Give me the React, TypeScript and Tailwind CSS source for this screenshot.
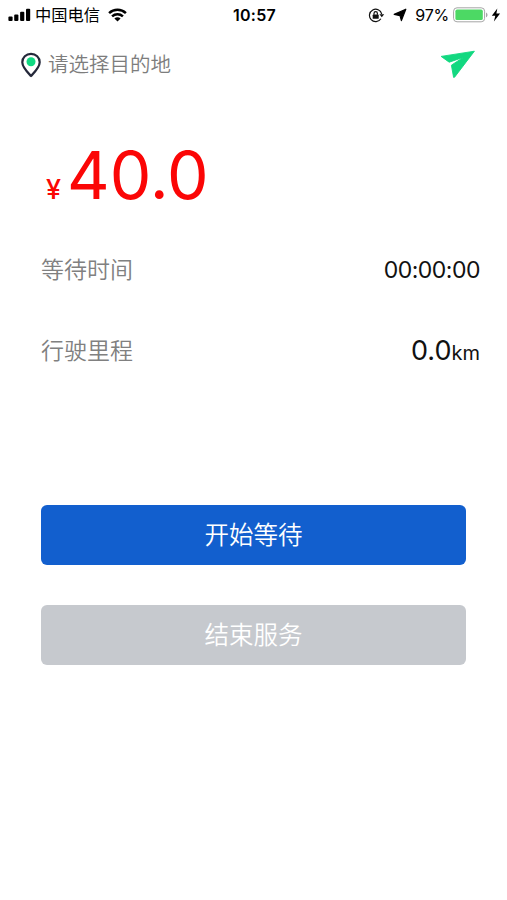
import React from 'react';

const SignalIcon = () => (
  <svg width="23" height="14" viewBox="0 0 23 14" fill="#000">
    <rect x="0.4" y="8.6" width="4.2" height="4.4" rx="1" />
    <rect x="6.2" y="6.4" width="4.2" height="6.6" rx="1" />
    <rect x="12.1" y="3.8" width="4.2" height="9.2" rx="1" />
    <rect x="18" y="0.8" width="4.2" height="12.2" rx="1" />
  </svg>
);

const WifiIcon = () => (
  <svg width="19" height="14" viewBox="0 0 19 14" fill="none" stroke="#000" strokeWidth="2.5">
    <path d="M1.1 5.1C5.8 0.6 13.2 0.6 17.9 5.1" />
    <path d="M4.1 8.4C7.1 5.6 11.9 5.6 14.9 8.4" />
    <path d="M9.5 13.6L6.4 10.5C8.1 8.9 10.9 8.9 12.6 10.5Z" fill="#000" stroke="none" />
  </svg>
);

const RotationLockIcon = () => (
  <svg width="17" height="15" viewBox="0 0 17 15" fill="none" stroke="#111" strokeWidth="1.2">
    <path d="M12.9 10.8A6.2 6.2 0 1 1 13.7 6" />
    <path d="M11.4 6.3H16.2L13.8 9.3Z" fill="#111" stroke="none" />
    <rect x="4.7" y="6.6" width="6" height="4.2" rx="0.6" fill="#111" stroke="none" />
    <path d="M6 6.8V5.4A1.7 1.7 0 0 1 9.4 5.4V6.8" />
  </svg>
);

const LocationArrowIcon = () => (
  <svg width="14" height="14" viewBox="0 0 14 14" fill="#000" stroke="#000" strokeWidth="1.2" strokeLinejoin="round">
    <path d="M12.8 1.2L8.4 12.6L7 7.6L1.2 6.4Z" />
  </svg>
);

const BatteryIcon = () => (
  <svg width="36" height="16" viewBox="0 0 36 16" fill="none">
    <rect x="0.6" y="0.8" width="31" height="14" rx="3.4" stroke="#a5a5a5" strokeWidth="1" />
    <rect x="2.4" y="2.6" width="27.4" height="10.4" rx="1.6" fill="#4cd964" />
    <path d="M33 5.4C35 6.2 35 9.4 33 10.2Z" fill="#a5a5a5" />
  </svg>
);

const BoltIcon = () => (
  <svg width="10" height="14" viewBox="0 0 10 14" fill="#000">
    <path d="M6.3 0.4L0.8 7.8H4.3L2.9 13.4L9.1 5.5H5.4Z" />
  </svg>
);

const PinIcon = () => (
  <svg width="22" height="26" viewBox="0 0 22 26" fill="none">
    <path
      d="M11 24C8 20.8 2.3 15.5 2.3 10.3C2.3 5.3 6.1 1.9 11 1.9C15.9 1.9 19.7 5.3 19.7 10.3C19.7 15.5 14 20.8 11 24Z"
      stroke="#24283a"
      strokeWidth="2.2"
      strokeLinejoin="round"
    />
    <circle cx="11" cy="9.8" r="4.5" fill="#10d982" />
  </svg>
);

const SendIcon = () => (
  <svg width="36" height="30" viewBox="0 0 36 30" fill="#12d880" stroke="#12d880" strokeWidth="0.9" strokeLinejoin="round">
    <path d="M34.4 1.2L1.1 6.4L9.2 12.2L23.2 7.4L11.4 15.2L13.6 27.4L14.6 27.2Z" />
  </svg>
);

const StatusBar = () => (
  <header className="flex h-[30px] items-center pr-[6px] pl-2 text-black">
    <div className="flex flex-1 items-center">
      <SignalIcon />
      <span className="ml-1 text-[16.3px] leading-none">中国电信</span>
      <span className="ml-2"><WifiIcon /></span>
    </div>
    <span className="text-[16px] leading-none font-semibold tracking-[0.3px]">10:57</span>
    <div className="flex flex-1 items-center justify-end">
      <RotationLockIcon />
      <span className="ml-2"><LocationArrowIcon /></span>
      <span className="ml-2 text-[16px] leading-none tracking-[-0.2px]">97%</span>
      <span className="ml-1"><BatteryIcon /></span>
      <span className="ml-[2px]"><BoltIcon /></span>
    </div>
  </header>
);

interface InfoRowProps {
  label: string;
  children: React.ReactNode;
}

const InfoRow: React.FC<InfoRowProps> = ({ label, children }) => (
  <div className="flex h-[81px] items-center justify-between pr-[27px] pl-[41px]">
    <span className="text-[23px] font-[350] text-[#808080]">{label}</span>
    <span className="text-[#111]">{children}</span>
  </div>
);

export default function App() {
  return (
    <div className="h-[900px] w-full overflow-hidden bg-white font-['Inter','Noto_Sans_CJK_SC',sans-serif]">
      <StatusBar />

      <div className="flex h-[70px] items-center justify-between pr-[31px] pl-5">
        <div className="flex items-center">
          <PinIcon />
          <span className="ml-[6px] pt-px text-[20.5px] font-[350] text-[#7d7d7d]">请选择目的地</span>
        </div>
        <SendIcon />
      </div>

      <div className="flex h-[130px] items-baseline pt-[35px] pl-[46px] text-[#fb0606]">
        <span className="text-[27px] font-medium">¥</span>
        <span className="ml-[6px] text-[66px] leading-[80px]">40.0</span>
      </div>

      <InfoRow label="等待时间">
        <span className="text-[23px] tracking-[-0.5px]">00:00:00</span>
      </InfoRow>
      <InfoRow label="行驶里程">
        <span className="text-[27px]">0.0</span>
        <span className="text-[20px]">km</span>
      </InfoRow>

      <div className="mt-[113px] flex flex-col gap-10 pr-[41px] pl-[41px]">
        <button className="h-[60px] rounded-md bg-[#125fce] text-[24.5px] font-[350] text-white">开始等待</button>
        <button className="h-[60px] rounded-md bg-[#c6c9ce] text-[24.5px] font-[350] text-white">结束服务</button>
      </div>
    </div>
  );
}
